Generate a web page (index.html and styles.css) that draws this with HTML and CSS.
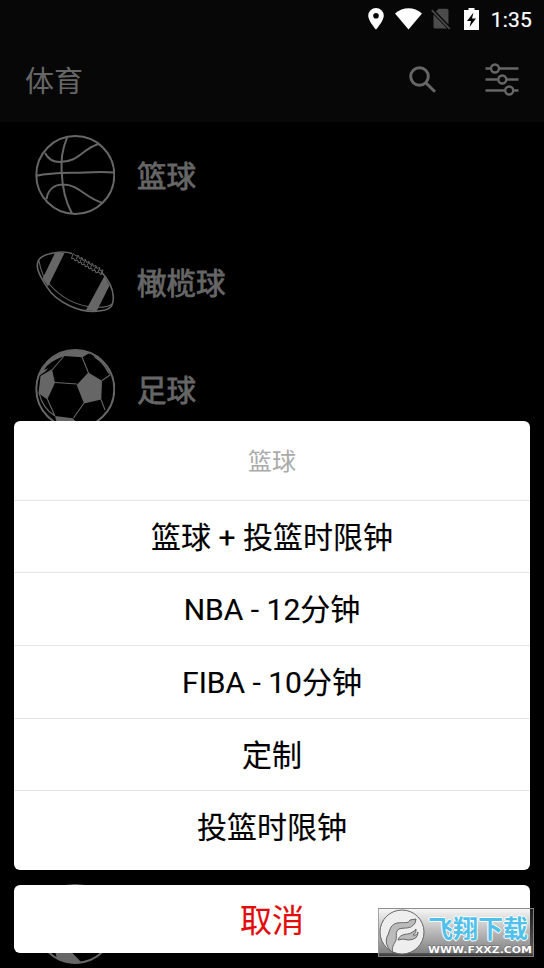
FILE: index.html
```html
<!DOCTYPE html>
<html lang="zh-CN">
<head>
<meta charset="utf-8">
<title>体育</title>
<link rel="stylesheet" href="styles.css">
</head>
<body>
<div class="screen">
  <div class="status">
    <svg class="pin" viewBox="0 0 16 22"><path fill-rule="evenodd" d="M8 0a7.800 7.800 0 0 0-7.800 7.800C.2 13 8 21.600 8 21.600S15.800 13 15.800 7.800A7.800 7.800 0 0 0 8 0zm0 5a2.800 2.800 0 1 1 0 5.600A2.800 2.800 0 0 1 8 5z"/></svg>
    <svg class="wifi" viewBox="0 0 27 22"><path d="M0 5.500C8-1.600 19-1.600 27 5.500L13.500 21.500z"/></svg>
    <svg class="nosim" viewBox="0 0 20 22"><path d="M2.500 6.500L16 20.500H4Q2.500 20.500 2.500 19zM5 3.500L7.500 .8H16Q17.500.8 17.500 2.300V16.500z"/><path class="slash" d="M.7 2.200L18.700 20.800"/></svg>
    <svg class="battery" viewBox="0 0 15 22"><path fill-rule="evenodd" d="M4.500 0h6v2H15v20H0V2h4.500zM9.500 4.500L3 13h4l-1.500 6L12 10.500H8z"/></svg>
    <span class="clock">1:35</span>
  </div>
  <header class="bar">
    <h1>体育</h1>
    <svg class="search" viewBox="0 0 28 28"><circle cx="10.500" cy="10.500" r="8.800"/><path d="M17 17l9 8.800"/></svg>
    <svg class="sliders" viewBox="0 0 34 34"><path d="M.5 5.500h5M15 5.500h18.500M.5 16.500h12M22 16.500h11.500M.5 27.500h19M29 27.500h4.500"/><circle cx="10" cy="5.500" r="4"/><circle cx="17.300" cy="16.500" r="4"/><circle cx="24.200" cy="27.500" r="4"/></svg>
  </header>
  <ul class="sports">
    <li>
      <svg class="ball" viewBox="0 0 80 80"><circle cx="40.300" cy="40" r="39"/><path d="M32 2.500C27 16 26 24 26.600 36C27.300 54 30 66 37 78.500M1.500 40.700C14 38 26 38 40 37.700S66 36.500 79.300 37.500M10 18C13 24 17 27 25 27C44 27 47 14 63.500 9M11.500 64C13 54 20 49.500 28.300 49.500C44 49.500 50 63 68 68"/></svg>
      <span>篮球</span>
    </li>
    <li>
      <svg class="ball" viewBox="0 0 80 80"><path class="seam" d="M66 29.500C74 38 78 46 78.300 55C78.500 62 77 66 70 68C58 71 46 69 35 64C24 59 16 52 11.700 44.700C7 37 3 32 2.300 24.700C2 17 6 13 20 10.700C27 9.500 34 10.500 37 11.500"/><path class="thin" d="M4 19C6 31 10 38 15 43C25 54 38 62 53 64.500C64 66 72 66 77 62"/><path class="patch" d="M20 11h9.500L13 44.500L7.500 36.500zM69.500 34l5 9.500L61.500 69.500L51 68z"/><path class="lace" d="M38 11.500L36.500 16.500l2.500 0 1 2.500 2.500-1 1 3 2.500-1 1 3 2.500-1 1 3 2.500-1 1 3 2.500-1 1 3 2.500-1 1 3 3-1L66 33l2-5-3 .5-.5-3-2.500 1-1-3-2.500 1-1-3-2.500 1-1-3-2.500 1-1-3-2.500 1-1-3-2.500 1-1-3-2.500.5zM41 17.500l2-3.500M45 19.500l2-3.500M48.500 21.500l2-3.500M52 23.500l2-3.500M55.500 25.500l2-3.500M59 28l2-3.500M62.500 30.500l2-3.500"/></svg>
      <span>橄榄球</span>
    </li>
    <li>
      <svg class="ball" viewBox="0 0 80 80"><use href="#soccer"/></svg>
      <span>足球</span>
    </li>
    <li class="last">
      <svg class="ball" viewBox="0 0 80 80">
        <defs><g id="soccer">
          <circle cx="40.300" cy="40" r="39"/>
          <path class="patch" d="M53.300 23.500L67 31.700L66.300 50.500L49 54.500L41.700 36zM17 20.300L20 33.700L12.300 50.500L3.500 44.300L5.500 27zM28.500 3.700Q40-1 54.500 4L47.300 8.300L29 7zM20 67L37.700 69.300L47 79Q34 81 22 75zM58 6Q70 12 76 27L73 24Q68 14 60 9zM28.500 3L29 7Q17 12 11 22L4 27Q11 10 28.500 3z"/>
          <path class="hole" d="M27.500 8Q14 12 9 21Q18 18 27.500 8z"/>
          <path class="thin" d="M29 7L17 21M47 8L53.500 24M20 33.500L42 35M67 31.500L75 26M66 50.500L70 61M49 54L38.500 69M12.300 50L20 67M4 44Q8 60 20 67"/>
        </g></defs>
        <use href="#soccer"/>
      </svg>
    </li>
  </ul>
  <div class="overlay">
    <div class="sheet">
      <div class="title">篮球</div>
      <div class="option">篮球 + 投篮时限钟</div>
      <div class="option">NBA - 12分钟</div>
      <div class="option">FIBA - 10分钟</div>
      <div class="option">定制</div>
      <div class="option">投篮时限钟</div>
    </div>
    <div class="cancel">取消</div>
  </div>
  <div class="watermark">
    <svg class="emblem" viewBox="0 0 46 46"><circle cx="23" cy="23" r="22"/><path d="M14 44C8 39 6 33 8 28C11 23 10 16 18 14C24 13 30 15 31 11L37 10L36 14C32 21 25 18 20 20C16 22 18 27 17 31C15 36 12 38 14 44zM19 31C21 24 28 26 32 24Q36 22 37 20Q38 24 34 26Q38 27 39 23Q39 31 29 31Q24 29 19 31z"/></svg>
    <div class="brand">
      <div class="name">飞翔下载</div>
      <svg class="site" viewBox="0 0 104 12"><text x="0" y="10" textLength="104" lengthAdjust="spacingAndGlyphs">WWW.FXXZ.COM</text></svg>
    </div>
  </div>
</div>
</body>
</html>
```

FILE: styles.css
```css
* { box-sizing: border-box; }
body {
  margin: 0;
  background: #000;
  font-family: Roboto, "Noto Sans CJK SC", sans-serif;
}
.screen {
  position: relative;
  width: 544px;
  height: 968px;
  overflow: hidden;
  background: #000;
}
.status {
  display: flex;
  align-items: center;
  justify-content: flex-end;
  height: 38px;
  padding-right: 12px;
  background: #070707;
  fill: #fff;
}
.pin { width: 16px; height: 22px; margin-right: 11px; }
.wifi { width: 27px; height: 22px; margin-right: 9px; }
.nosim { width: 20px; height: 22px; margin-right: 13px; fill: #4b4b4b; }
.slash { stroke: #4b4b4b; stroke-width: 1.700; fill: none; }
.battery { width: 15px; height: 22px; margin-right: 12px; }
.clock {
  padding-top: 2px;
  color: #fff;
  font-size: 21px;
  line-height: 36px;
  letter-spacing: 0.2px;
  -webkit-text-stroke: 0.2px #fff;
}
.bar {
  display: flex;
  align-items: center;
  height: 84px;
  padding: 0 25px;
  background: #070707;
}
.bar h1 {
  flex: 1;
  margin: 0;
  padding-top: 3px;
  color: #666;
  font-size: 29px;
  font-weight: 400;
  line-height: 40px;
}
.search, .sliders { fill: none; stroke: #666; }
.search { width: 28px; height: 28px; margin-right: 48px; stroke-width: 3; }
.sliders { width: 34px; height: 34px; stroke-width: 2.400; }
.sports {
  display: grid;
  grid-auto-rows: 107px;
  margin: -1px 0 0;
  padding: 0 35px;
  list-style: none;
}
.sports li {
  display: flex;
  align-items: center;
  gap: 22px;
  color: #666;
  font-size: 29.500px;
  font-weight: 400;
  line-height: 40px;
  -webkit-text-stroke: 0.800px #666;
}
.sports span { padding-top: 5px; }
.sports .last { grid-row: 8; }
.ball { width: 80px; height: 80px; fill: none; stroke: #666; stroke-width: 2; }
.seam { stroke-width: 1.600; }
.thin { stroke-width: 1.100; }
.lace { stroke-width: 1; }
.patch { fill: #666; stroke: none; }
.hole { fill: #000; stroke: none; }
.overlay {
  position: absolute;
  inset: 421px 14px 15px;
  display: flex;
  flex-direction: column;
  gap: 15px;
  text-align: center;
}
.sheet {
  flex: none;
  height: 449px;
  border-radius: 6px;
  background: #fff;
  color: #000;
}
.title { height: 78.500px; padding-top: 2px; color: #aaa; font-size: 24px; line-height: 79px; }
.option {
  height: 72.700px;
  border-top: 1.500px solid #e6e6e6;
  font-size: 30px;
  line-height: 74px;
  -webkit-text-stroke: 0.150px #000;
}
.cancel {
  height: 68px;
  padding-top: 2px;
  border-radius: 6px;
  background: #fff;
  color: #e30b0b;
  font-size: 32px;
  line-height: 68px;
  -webkit-text-stroke: 0.150px #e30b0b;
}
.watermark {
  position: absolute;
  left: 378px;
  top: 908px;
  display: flex;
  gap: 3px;
  width: 156px;
  height: 49px;
  border: 1px solid rgba(150, 150, 150, 0.8);
  background: linear-gradient(rgba(190, 190, 190, 0.15), rgba(110, 110, 110, 0.85) 92%, rgba(70, 70, 70, 0.8));
}
.emblem { width: 46px; height: 46px; fill: #bbb; stroke: #666; stroke-width: 1; }
.emblem circle { fill: #eee; }
.brand { display: flex; flex-direction: column; padding-top: 6px; }
.name {
  height: 28px;
  font: 700 25px/25px "Noto Sans CJK SC", sans-serif;
  color: #4fc1ea;
  text-shadow: 1px 0 #fff, -1px 0 #fff, 0 1px #fff, 0 -1px #fff;
}
.site { width: 104px; height: 12px; }
.site text { fill: #fff; stroke: #666; stroke-width: 1; paint-order: stroke; font: 700 9px "DejaVu Sans", sans-serif; }
```
